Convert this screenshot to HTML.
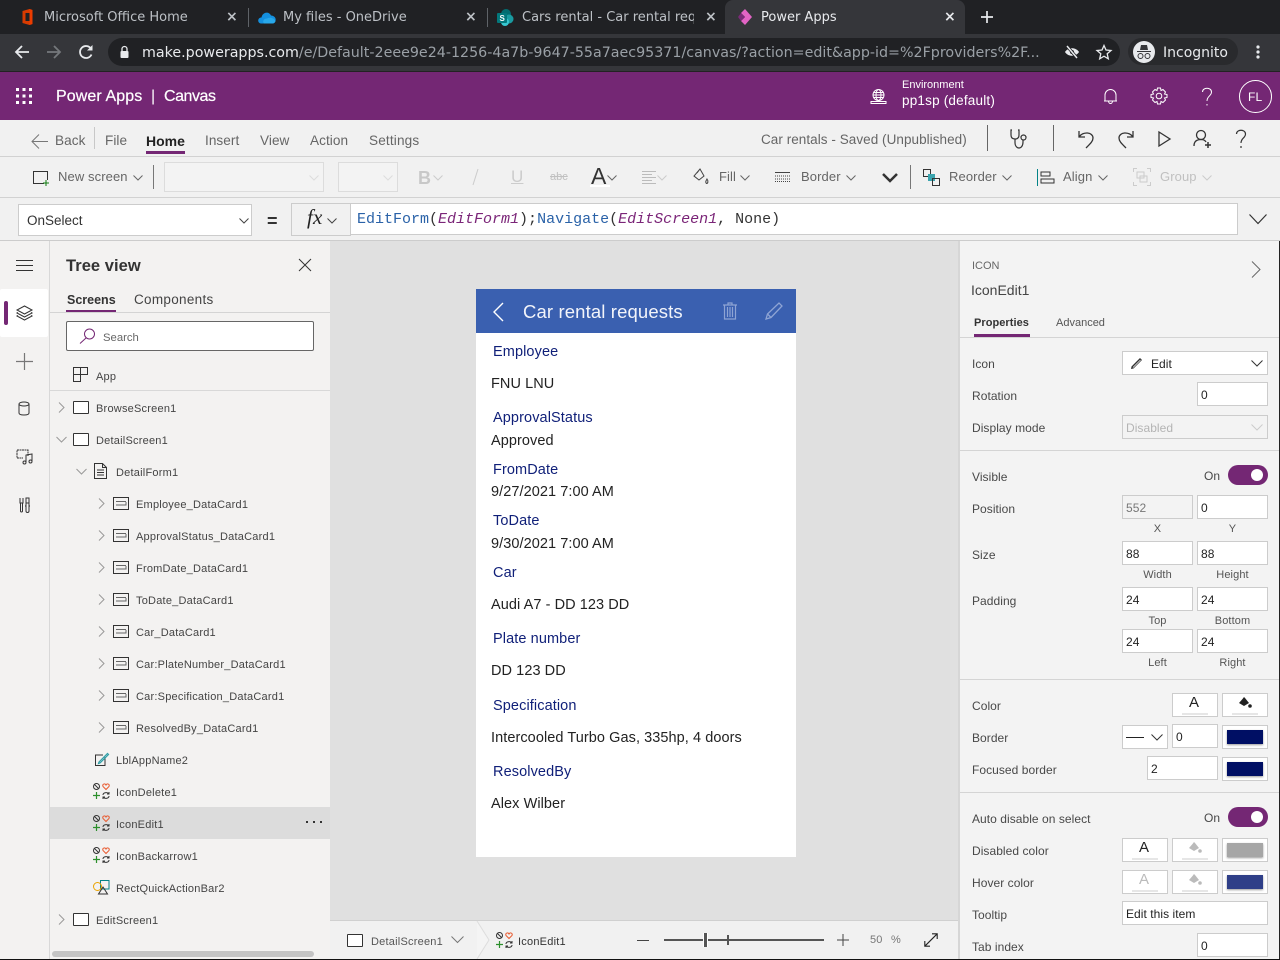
<!DOCTYPE html>
<html><head><meta charset="utf-8"><title>Power Apps</title>
<style>
html,body{margin:0;padding:0;width:1280px;height:960px;overflow:hidden;background:#f3f3f3}
body{position:relative;font-family:"Liberation Sans",sans-serif;font-size:13px;color:#444}
div,span.t,svg.a{position:absolute}
.t{position:absolute;white-space:nowrap;line-height:20px;height:20px;letter-spacing:.15px}
.d{font-family:"DejaVu Sans",sans-serif;letter-spacing:0}
.r{font-size:11px;color:#444;letter-spacing:.22px;margin-top:1px}
.p{font-size:12px;color:#484848;letter-spacing:.05px}
.c{font-size:11px;color:#555;text-align:center;letter-spacing:.1px}
.i{position:absolute;box-sizing:border-box;background:#fff;border:1px solid #ccc;font-size:12px;color:#222;line-height:24px;padding-left:3px;height:24px;letter-spacing:.05px}
.s{position:absolute;box-sizing:border-box;background:#fff;border:1px solid #ccc;height:24px;width:46px}
.s b{position:absolute;left:4px;top:4px;width:36px;height:14px;box-shadow:0 1px 2px #999}
.s u{position:absolute;left:9px;top:19px;width:26px;height:2px;background:#e6e6e6}
.l{font-size:14.5px;color:#0f1f78;letter-spacing:.1px}
.v{font-size:14.5px;color:#222;letter-spacing:.07px}
.m{font-size:13px;color:#666;letter-spacing:.1px}
.o{font-size:13.6px;color:#666;letter-spacing:.05px}
svg{position:absolute;overflow:visible}
.h{position:absolute;background:#d4d4d4;height:2px}
.tg{position:absolute;left:1228px;width:40px;height:20px;border-radius:10px;background:#742774}
.tg i{position:absolute;right:5px;top:4px;width:12px;height:12px;border-radius:6px;background:#fff}
</style></head><body>

<!-- Browser chrome -->
<div style="left:0;top:0;width:1280px;height:34px;background:#202124"></div>
<div style="left:0;top:34px;width:1280px;height:37px;background:#35363a"></div>
<div style="left:0;top:71px;width:1280px;height:1px;background:#222"></div>
<div style="left:725px;top:0;width:240px;height:34px;background:#35363a;border-radius:8px 8px 0 0"></div>
<div style="left:248px;top:8px;width:1px;height:19px;background:#5f6368"></div>
<div style="left:487px;top:8px;width:1px;height:19px;background:#5f6368"></div>

<svg style="left:21px;top:8px" width="13" height="18" viewBox="0 0 12 18"><path d="M1 3 8 1 11 2V16L8 17 1 15Z" fill="#d83b01"/><path d="M4 5H8V13H4Z" fill="#202124"/><path d="M8 1 11 2V16L8 17Z" fill="#eb3c00"/></svg>
<span class="t d" style="left:44px;top:8px;font-size:13px;color:#bdc1c6">Microsoft Office Home</span>
<span class="t d" style="left:226px;top:7px;font-size:14px;color:#bdc1c6;font-weight:bold">×</span>

<svg style="left:258px;top:11px" width="18" height="13" viewBox="0 0 18 13"><path d="M3 12.500C-1 12 -.5 6.500 3.500 6.500 4.500 1 11 0 13 4.500 16 4.500 18.500 7 17.500 10 17 12 15.500 12.500 14 12.500Z" fill="#1490df"/><path d="M6 12.500C4 10 6 7.500 9 7.500 12 6 16 7 17.500 10 17 12 15.500 12.500 14 12.500Z" fill="#28a8ea"/></svg>
<span class="t d" style="left:283px;top:8px;font-size:13px;color:#bdc1c6">My files - OneDrive</span>
<span class="t d" style="left:465px;top:7px;font-size:14px;color:#bdc1c6;font-weight:bold">×</span>

<svg style="left:497px;top:9px" width="17" height="17" viewBox="0 0 17 17"><circle cx="9" cy="5" r="5" fill="#036c70"/><circle cx="12" cy="10" r="4.500" fill="#1a9ba1"/><circle cx="8" cy="13" r="4" fill="#37c6d0"/><rect x="0" y="4" width="10" height="10" rx="1" fill="#03787c"/><text x="2.500" y="12" font-size="8" font-weight="bold" fill="#fff" font-family="Liberation Sans">S</text></svg>
<span class="t d" style="left:522px;top:8px;font-size:13px;color:#bdc1c6;width:172px;overflow:hidden">Cars rental - Car rental requests</span>
<span class="t d" style="left:705px;top:7px;font-size:14px;color:#bdc1c6;font-weight:bold">×</span>

<svg style="left:738px;top:8px" width="15" height="18" viewBox="0 0 15 18"><path d="M7 1 14 9 7 17 3 13 7 9 3 5Z" fill="#e264c4"/><path d="M3 5 7 9 3 13 0 9Z" fill="#7c2a78"/></svg>
<span class="t d" style="left:761px;top:8px;font-size:13px;color:#e8eaed">Power Apps</span>
<span class="t d" style="left:944px;top:7px;font-size:14px;color:#e8eaed;font-weight:bold">×</span>
<svg style="left:980px;top:10px" width="14" height="14"><path d="M7 1V13M1 7H13" stroke="#e8eaed" stroke-width="1.700"/></svg>

<svg style="left:14px;top:44px" width="16" height="16" viewBox="0 0 16 16"><path d="M15 8H2M8 2 2 8 8 14" fill="none" stroke="#e8eaed" stroke-width="1.800"/></svg>
<svg style="left:46px;top:44px" width="16" height="16" viewBox="0 0 16 16"><path d="M1 8H14M8 2 14 8 8 14" fill="none" stroke="#75787c" stroke-width="1.800"/></svg>
<svg style="left:78px;top:44px" width="16" height="16" viewBox="0 0 16 16"><path d="M13.500 10.500A6 6 0 1 1 12 3.500L14 5.500" fill="none" stroke="#e8eaed" stroke-width="1.800"/><path d="M14.500 1V6.500H9Z" fill="#e8eaed"/></svg>
<div style="left:108px;top:38px;width:1012px;height:28px;background:#202124;border-radius:14px"></div>
<svg style="left:119px;top:45px" width="11" height="14" viewBox="0 0 11 14"><path d="M3 6V4A2.500 2.500 0 0 1 8 4V6" fill="none" stroke="#e8eaed" stroke-width="1.300"/><rect x="1.500" y="6" width="8" height="7" rx="1" fill="#e8eaed"/></svg>
<span class="t d" style="left:142px;top:43px;font-size:14.26px;color:#e8eaed;letter-spacing:0">make.powerapps.com<span style="color:#9aa0a6">/e/Default-2eee9e24-1256-4a7b-9647-55a7aec95371/canvas/?action=edit&amp;app-id=%2Fproviders%2F...</span></span>
<svg style="left:1064px;top:44px" width="16" height="16" viewBox="0 0 16 16"><path d="M1 8C4 3 12 3 15 8 12 13 4 13 1 8Z" fill="#e8eaed"/><circle cx="8" cy="8" r="2" fill="#202124"/><path d="M3 2 13 14" stroke="#202124" stroke-width="3"/><path d="M3 2 13 14" stroke="#e8eaed" stroke-width="1.500"/></svg>
<svg style="left:1096px;top:44px" width="16" height="16" viewBox="0 0 16 16"><path d="M8 1.500 10 6 15 6.500 11.200 9.800 12.300 14.800 8 12.200 3.700 14.800 4.800 9.800 1 6.500 6 6Z" fill="none" stroke="#e8eaed" stroke-width="1.300"/></svg>
<div style="left:1128px;top:38px;width:110px;height:27px;background:#292a2d;border-radius:14px"></div>
<svg style="left:1133px;top:41px" width="22" height="22" viewBox="0 0 22 22"><circle cx="11" cy="11" r="11" fill="#e8eaed"/><path d="M4 10H18V11H4ZM7 9 8 4H14L15 9Z" fill="#35363a"/><circle cx="7.500" cy="15" r="2.500" fill="none" stroke="#35363a"/><circle cx="14.500" cy="15" r="2.500" fill="none" stroke="#35363a"/></svg>
<span class="t d" style="left:1163px;top:43px;font-size:14px;color:#e8eaed">Incognito</span>
<svg style="left:1256px;top:45px" width="4" height="14"><circle cx="2" cy="2" r="1.600" fill="#e8eaed"/><circle cx="2" cy="7" r="1.600" fill="#e8eaed"/><circle cx="2" cy="12" r="1.600" fill="#e8eaed"/></svg>

<!-- Purple bar -->
<div style="left:0;top:72px;width:1280px;height:48px;background:#742774"></div>
<svg style="left:16px;top:88px" width="16" height="16" fill="#fff"><rect width="3" height="3"/><rect x="6.500" width="3" height="3"/><rect x="13" width="3" height="3"/><rect y="6.500" width="3" height="3"/><rect x="6.500" y="6.500" width="3" height="3"/><rect x="13" y="6.500" width="3" height="3"/><rect y="13" width="3" height="3"/><rect x="6.500" y="13" width="3" height="3"/><rect x="13" y="13" width="3" height="3"/></svg>
<span class="t" style="left:56px;top:87px;font-size:16px;color:#fff;letter-spacing:.1px;-webkit-text-stroke:.2px #fff">Power Apps</span>
<span class="t" style="left:151px;top:87px;font-size:16px;color:#fff">|</span>
<span class="t" style="left:164px;top:87px;font-size:16px;color:#fff;letter-spacing:-.45px;-webkit-text-stroke:.2px #fff">Canvas</span>
<svg style="left:870px;top:88px" width="17" height="17" viewBox="0 0 17 17" fill="none" stroke="#fff"><circle cx="8.500" cy="7" r="5.500"/><ellipse cx="8.500" cy="7" rx="2.500" ry="5.500"/><path d="M3 7H14M4 4.500H13M4 9.500H13M1 13.500H16V15.500H1Z"/></svg>
<span class="t" style="left:902px;top:75px;font-size:11px;color:#fff;letter-spacing:0">Environment</span>
<span class="t" style="left:902px;top:91px;font-size:13.5px;color:#fff;letter-spacing:.2px">pp1sp (default)</span>
<svg style="left:1103px;top:88px" width="15" height="17" viewBox="0 0 15 17" fill="none" stroke="#fff"><path d="M2 13V7A5.500 5.500 0 0 1 13 7V13ZM1 13H14M5.500 13A2 2.500 0 0 0 9.500 13"/></svg>
<svg style="left:1150px;top:87px" width="18" height="18" viewBox="0 0 18 18" fill="none" stroke="#fff"><circle cx="9" cy="9" r="2.800"/><path d="M7.500 1H10.500L11 3.500 13 2.500 15.500 5 14.500 7 17 7.500V10.500L14.500 11 15.500 13 13 15.500 11 14.500 10.500 17H7.500L7 14.500 5 15.500 2.500 13 3.500 11 1 10.500V7.500L3.500 7 2.500 5 5 2.500 7 3.500Z"/></svg>
<svg style="left:1201px;top:87px" width="12" height="19" viewBox="0 0 12 19" fill="none" stroke="#fff"><path d="M1.500 5C1.500 0 10.500 0 10.500 5 10.500 9 6 9 6 14M6 17V18.500"/></svg>
<div style="left:1239px;top:80px;width:31px;height:31px;border:1px solid #fff;border-radius:50%"></div>
<span class="t" style="left:1248px;top:87px;font-size:12px;color:#fff;letter-spacing:.2px">FL</span>

<!-- Tabs row -->
<div style="left:0;top:120px;width:1280px;height:77px;background:#f1f1f1"></div>
<div class="h" style="left:0;top:156px;width:1280px;height:1px;background:#d2d2d2"></div>
<svg style="left:31px;top:134px" width="17" height="15" viewBox="0 0 17 15"><path d="M17 7.500H1M8 .5 1 7.500 8 14.500" fill="none" stroke="#777" stroke-width="1"/></svg>
<span class="t o" style="left:55px;top:131px">Back</span>
<div style="left:94px;top:127px;width:1px;height:22px;background:#c8c8c8"></div>
<span class="t o" style="left:105px;top:131px">File</span>
<span class="t o" style="left:146px;top:131px;color:#222;font-weight:bold;font-size:14px;letter-spacing:0">Home</span>
<div style="left:146px;top:151px;width:39px;height:3px;background:#742774"></div>
<span class="t o" style="left:205px;top:131px">Insert</span>
<span class="t o" style="left:260px;top:131px">View</span>
<span class="t o" style="left:310px;top:131px">Action</span>
<span class="t o" style="left:369px;top:131px;letter-spacing:.15px">Settings</span>
<span class="t o" style="left:761px;top:130px;font-size:13.5px;letter-spacing:.05px">Car rentals - Saved (Unpublished)</span>
<div style="left:987px;top:125px;width:1px;height:26px;background:#666"></div>
<div style="left:1053px;top:125px;width:1px;height:26px;background:#666"></div>
<svg style="left:1010px;top:128px" width="22" height="22" viewBox="0 0 22 22" fill="none" stroke="#333" stroke-width="1.200"><path d="M2 2H1V7C1 10 3 11 5 11S9 10 9 7V2H8M5 11V15C5 18 7 20 9 20S13 18 13 14V12"/><circle cx="13.500" cy="9.500" r="2.500"/></svg>
<svg style="left:1077px;top:129px" width="18" height="20" viewBox="0 0 18 20" fill="none" stroke="#333" stroke-width="1.300"><path d="M2 2V8H8M2 8C6 2 16 3 16 9 16 12 14 14 9 19"/></svg>
<svg style="left:1117px;top:129px" width="18" height="20" viewBox="0 0 18 20" fill="none" stroke="#333" stroke-width="1.300"><path d="M16 2V8H10M16 8C12 2 2 3 2 9 2 12 4 14 9 19"/></svg>
<svg style="left:1158px;top:131px" width="13" height="16" viewBox="0 0 13 16" fill="none" stroke="#333" stroke-width="1.300"><path d="M1 1 12 8 1 15Z"/></svg>
<svg style="left:1193px;top:129px" width="20" height="20" viewBox="0 0 20 20" fill="none" stroke="#333" stroke-width="1.300"><circle cx="8" cy="6" r="4.500"/><path d="M1 17C1 12 4 10.500 8 10.500 10 10.500 12 11 13 13"/><path d="M15 13V19M12 16H18" stroke-width="1.500"/></svg>
<svg style="left:1235px;top:129px" width="12" height="20" viewBox="0 0 12 20" fill="none" stroke="#333" stroke-width="1.200"><path d="M1.500 5C1.500 0 10.500 0 10.500 5 10.500 9 6 9 6 14M6 17V19"/></svg>

<!-- Ribbon -->
<div class="h" style="left:0;top:197px;width:1280px;height:1px;background:#d2d2d2"></div>
<svg style="left:32px;top:170px" width="17" height="16" viewBox="0 0 17 16" fill="none"><path d="M12 13.500H1.500V1.500H15.500V10" stroke="#333"/><path d="M14 10V16M11 13H17" stroke="#107c10"/></svg>
<span class="t m" style="left:58px;top:167px">New screen</span>
<svg style="left:133px;top:175px" width="10" height="6"><path d="M.5 .5 5 5 9.500 .5" fill="none" stroke="#666"/></svg>
<div style="left:153px;top:165px;width:1px;height:24px;background:#777"></div>
<div style="left:164px;top:162px;width:160px;height:30px;box-sizing:border-box;background:#f3f3f3;border:1px solid #dcdcdc"></div>
<svg style="left:309px;top:175px" width="10" height="6"><path d="M.5 .5 5 5 9.500 .5" fill="none" stroke="#ddd"/></svg>
<div style="left:338px;top:162px;width:60px;height:30px;box-sizing:border-box;background:#f3f3f3;border:1px solid #dcdcdc"></div>
<svg style="left:383px;top:175px" width="10" height="6"><path d="M.5 .5 5 5 9.500 .5" fill="none" stroke="#ddd"/></svg>
<span class="t" style="left:418px;top:168px;font-size:18px;font-weight:bold;color:#c8c8c8">B</span>
<svg style="left:433px;top:175px" width="10" height="6"><path d="M.5 .5 5 5 9.500 .5" fill="none" stroke="#ccc"/></svg>
<svg style="left:472px;top:169px" width="8" height="17"><path d="M6 0 1 16" stroke="#ccc" stroke-width="1"/></svg>
<span class="t" style="left:511px;top:167px;font-size:17px;color:#ccc;font-weight:200;text-decoration:underline">U</span>
<span class="t" style="left:550px;top:167px;font-size:11px;color:#c0c0c0;letter-spacing:0;text-decoration:line-through">abc</span>
<span class="t" style="left:591px;top:166px;font-size:23px;color:#333">A</span>
<div style="left:590px;top:185px;width:20px;height:2px;background:#fff"></div>
<svg style="left:607px;top:175px" width="10" height="6"><path d="M.5 .5 5 5 9.500 .5" fill="none" stroke="#666"/></svg>
<svg style="left:642px;top:170px" width="14" height="14" stroke="#bbb"><path d="M0 1.500H14M0 4.500H10M0 7.500H14M0 10.500H10M0 13.500H14"/></svg>
<svg style="left:657px;top:175px" width="10" height="6"><path d="M.5 .5 5 5 9.500 .5" fill="none" stroke="#ccc"/></svg>
<svg style="left:693px;top:168px" width="17" height="17" viewBox="0 0 17 17" fill="none" stroke="#444"><path d="M7 1 11 8 6 12 1 8ZM7 1 4 5"/><path d="M14 11C13 13 12 14 13.500 15.500 15 15.500 15.500 13 14 11Z"/></svg>
<span class="t m" style="left:719px;top:167px">Fill</span>
<svg style="left:740px;top:175px" width="10" height="6"><path d="M.5 .5 5 5 9.500 .5" fill="none" stroke="#666"/></svg>
<svg style="left:775px;top:172px" width="15" height="10" stroke="#444"><path d="M0 .5H15" /><path d="M0 4H15M0 7H15M0 9.500H15" stroke-dasharray="1 1"/></svg>
<span class="t m" style="left:801px;top:167px">Border</span>
<svg style="left:846px;top:175px" width="10" height="6"><path d="M.5 .5 5 5 9.500 .5" fill="none" stroke="#666"/></svg>
<svg style="left:882px;top:173px" width="16" height="10"><path d="M1 1 8 8 15 1" fill="none" stroke="#333" stroke-width="2.500"/></svg>
<div style="left:910px;top:165px;width:1px;height:24px;background:#777"></div>
<svg style="left:923px;top:169px" width="17" height="17" fill="none" stroke="#333"><rect x=".5" y=".5" width="7" height="7"/><rect x="5" y="5" width="7" height="7" fill="#3aa4ae" stroke="none"/><rect x="9.500" y="9.500" width="7" height="7"/></svg>
<span class="t m" style="left:949px;top:167px">Reorder</span>
<svg style="left:1002px;top:175px" width="10" height="6"><path d="M.5 .5 5 5 9.500 .5" fill="none" stroke="#666"/></svg>
<svg style="left:1037px;top:169px" width="17" height="17" fill="none" stroke="#333"><path d="M.5 0V17" stroke="#038387"/><rect x="4" y="3" width="9" height="4"/><rect x="4" y="10" width="13" height="4"/></svg>
<span class="t m" style="left:1063px;top:167px">Align</span>
<svg style="left:1098px;top:175px" width="10" height="6"><path d="M.5 .5 5 5 9.500 .5" fill="none" stroke="#666"/></svg>
<svg style="left:1133px;top:168px" width="18" height="18" fill="none" stroke="#ccc"><path d="M.5 4V.5H4M14 .5H17.500V4M.5 14V17.500H4M14 17.500H17.500V14" /><rect x="4" y="4" width="7" height="6"/><rect x="7" y="8" width="7" height="6"/></svg>
<span class="t m" style="left:1160px;top:167px;color:#c0c0c0">Group</span>
<svg style="left:1202px;top:175px" width="10" height="6"><path d="M.5 .5 5 5 9.500 .5" fill="none" stroke="#ccc"/></svg>

<!-- Formula bar -->
<div style="left:0;top:198px;width:1280px;height:42px;background:#f1f1f1"></div>
<div style="left:0;top:240px;width:1280px;height:1px;background:#ccc"></div>
<div style="left:18px;top:204px;width:234px;height:32px;box-sizing:border-box;background:#fff;border:1px solid #ccc"></div>
<span class="t" style="left:27px;top:211px;font-size:13.5px;color:#333;letter-spacing:0">OnSelect</span>
<svg style="left:239px;top:218px" width="10" height="6"><path d="M.5 .5 5 5 9.500 .5" fill="none" stroke="#444"/></svg>
<span class="t" style="left:267px;top:211px;font-size:18px;color:#333;font-weight:bold">=</span>
<div style="left:291px;top:203px;width:60px;height:33px;box-sizing:border-box;background:#f1f1f1;border:1px solid #ccc"></div>
<span class="t" style="left:307px;top:207px;font-family:'Liberation Serif',serif;font-style:italic;font-size:21px;color:#222">fx</span>
<svg style="left:327px;top:218px" width="10" height="6"><path d="M.5 .5 5 5 9.500 .5" fill="none" stroke="#444"/></svg>
<div style="left:350px;top:203px;width:888px;height:32px;box-sizing:border-box;background:#fff;border:1px solid #ccc"></div>
<span class="t" style="left:357px;top:210px;font-family:'Liberation Mono',monospace;font-size:15px;letter-spacing:0;color:#333"><span style="color:#2a62a8">EditForm</span>(<i style="color:#7b2578">EditForm1</i>);<span style="color:#2a62a8">Navigate</span>(<i style="color:#7b2578">EditScreen1</i>, None)</span>
<svg style="left:1249px;top:214px" width="18" height="11"><path d="M.5 .5 9 9.500 17.500 .5" fill="none" stroke="#333" stroke-width="1.200"/></svg>

<!-- Left rail -->
<div style="left:0;top:241px;width:50px;height:719px;background:#f3f2f1;border-right:1px solid #d8d8d8;box-sizing:border-box"></div>
<svg style="left:16px;top:260px" width="17" height="11" stroke="#333"><path d="M0 .5H17M0 5.500H17M0 10.500H17"/></svg>
<div style="left:0;top:289px;width:48px;height:48px;background:#fff;border-radius:2px"></div>
<div style="left:4px;top:301px;width:4px;height:24px;background:#742774;border-radius:2px"></div>
<svg style="left:16px;top:305px" width="17" height="16" viewBox="0 0 17 16" fill="none" stroke="#333"><path d="M8.500 1 16 5 8.500 9 1 5Z"/><path d="M2 7.500 1 8 8.500 12 16 8 15 7.500M2 10.500 1 11 8.500 15 16 11 15 10.500"/></svg>
<svg style="left:16px;top:353px" width="17" height="17" stroke="#777" stroke-width="1.200"><path d="M8.500 0V17M0 8.500H17"/></svg>
<svg style="left:18px;top:401px" width="12" height="15" viewBox="0 0 12 15" fill="none" stroke="#333"><ellipse cx="6" cy="3" rx="5" ry="2"/><path d="M1 3V12C1 13.200 3 14 6 14S11 13.200 11 12V3"/></svg>
<svg style="left:16px;top:449px" width="17" height="16" viewBox="0 0 17 16" fill="none" stroke="#333"><path d="M12 7V1H1V9H7" stroke-dasharray="2 .5"/><path d="M10 13V6L16 5V12"/><circle cx="8.500" cy="13.500" r="1.500"/><circle cx="14.500" cy="12.500" r="1.500"/></svg>
<svg style="left:19px;top:497px" width="11" height="16" viewBox="0 0 11 16" fill="none" stroke="#333"><path d="M1 1V6H4V1M1.500 6V14A1 1 0 0 0 3.500 14V6"/><path d="M7 1H10V6H7ZM7 6V14A1.500 1.500 0 0 0 10 14V6M6 9H7M10 9H11"/></svg>

<!-- Tree -->
<div style="left:50px;top:241px;width:280px;height:719px;background:#f3f2f1"></div>
<span class="t" style="left:66px;top:256px;font-size:16.5px;font-weight:bold;color:#333;letter-spacing:.05px">Tree view</span>
<svg style="left:299px;top:259px" width="12" height="12" stroke="#333"><path d="M0 0 12 12M12 0 0 12"/></svg>
<span class="t" style="left:67px;top:290px;font-size:12.5px;color:#333;font-weight:bold;letter-spacing:0">Screens</span>
<span class="t" style="left:134px;top:290px;font-size:13.5px;color:#444;letter-spacing:.3px">Components</span>
<div style="left:66px;top:310px;width:50px;height:2px;background:#742774"></div>
<div style="left:50px;top:312px;width:280px;height:1px;background:#d4d4d4"></div>
<div style="left:66px;top:321px;width:248px;height:30px;box-sizing:border-box;background:#fff;border:1px solid #666;border-radius:2px"></div>
<svg style="left:79px;top:328px" width="17" height="16" viewBox="0 0 17 16" fill="none" stroke="#742774"><circle cx="10.500" cy="6" r="5"/><path d="M7 10 1 15.500"/></svg>
<span class="t" style="left:103px;top:328px;font-size:11.3px;color:#666;letter-spacing:0">Search</span>
<svg style="left:73px;top:367px" width="15" height="15" fill="none" stroke="#333"><path d="M.5 .5H14.500V7.500H7.500V14.500H.5ZM.5 7.500H7.500V.5"/></svg>
<span class="t r" style="left:96px;top:366px">App</span>
<div style="left:50px;top:390px;width:280px;height:1px;background:#d8d8d8"></div>

<div style="left:50px;top:807px;width:280px;height:32px;background:#dcdcdc"></div>
<svg style="left:306px;top:821px" width="16" height="3" fill="#333"><rect width="2" height="2"/><rect x="7" width="2" height="2"/><rect x="14" width="2" height="2"/></svg>

<!-- chevrons -->
<svg style="left:58px;top:402px" width="7" height="11"><path d="M1 .5 6 5.500 1 10.500" fill="none" stroke="#999"/></svg>
<svg style="left:56px;top:436px" width="11" height="7"><path d="M.5 1 5.500 6 10.500 1" fill="none" stroke="#999"/></svg>
<svg style="left:76px;top:468px" width="11" height="7"><path d="M.5 1 5.500 6 10.500 1" fill="none" stroke="#999"/></svg>
<svg style="left:98px;top:498px" width="7" height="11"><path d="M1 .5 6 5.500 1 10.500" fill="none" stroke="#999"/></svg>
<svg style="left:98px;top:530px" width="7" height="11"><path d="M1 .5 6 5.500 1 10.500" fill="none" stroke="#999"/></svg>
<svg style="left:98px;top:562px" width="7" height="11"><path d="M1 .5 6 5.500 1 10.500" fill="none" stroke="#999"/></svg>
<svg style="left:98px;top:594px" width="7" height="11"><path d="M1 .5 6 5.500 1 10.500" fill="none" stroke="#999"/></svg>
<svg style="left:98px;top:626px" width="7" height="11"><path d="M1 .5 6 5.500 1 10.500" fill="none" stroke="#999"/></svg>
<svg style="left:98px;top:658px" width="7" height="11"><path d="M1 .5 6 5.500 1 10.500" fill="none" stroke="#999"/></svg>
<svg style="left:98px;top:690px" width="7" height="11"><path d="M1 .5 6 5.500 1 10.500" fill="none" stroke="#999"/></svg>
<svg style="left:98px;top:722px" width="7" height="11"><path d="M1 .5 6 5.500 1 10.500" fill="none" stroke="#999"/></svg>
<svg style="left:58px;top:914px" width="7" height="11"><path d="M1 .5 6 5.500 1 10.500" fill="none" stroke="#999"/></svg>

<!-- screen icons -->
<div style="left:73px;top:401px;width:14px;height:11px;border:1px solid #333;border-radius:1px;background:#fff"></div>
<div style="left:73px;top:433px;width:14px;height:11px;border:1px solid #333;border-radius:1px;background:#fff"></div>
<div style="left:73px;top:913px;width:14px;height:11px;border:1px solid #333;border-radius:1px;background:#fff"></div>
<svg style="left:94px;top:463px" width="13" height="16" viewBox="0 0 13 16" fill="none" stroke="#333"><path d="M.5 .5H8.500L12.500 4.500V15.500H.5ZM8.500 .5V4.500H12.500M3 7H10M3 9.500H10M3 12H10"/></svg>

<span class="t r" style="left:96px;top:398px">BrowseScreen1</span>
<span class="t r" style="left:96px;top:430px">DetailScreen1</span>
<span class="t r" style="left:116px;top:462px">DetailForm1</span>

<svg style="left:113px;top:497px" width="16" height="13" fill="none" stroke="#333"><rect x=".5" y=".5" width="15" height="12"/><path d="M3 4.500H13M3 8H13V5" stroke="#666"/></svg>
<span class="t r" style="left:136px;top:494px">Employee_DataCard1</span>
<svg style="left:113px;top:529px" width="16" height="13" fill="none" stroke="#333"><rect x=".5" y=".5" width="15" height="12"/><path d="M3 4.500H13M3 8H13V5" stroke="#666"/></svg>
<span class="t r" style="left:136px;top:526px">ApprovalStatus_DataCard1</span>
<svg style="left:113px;top:561px" width="16" height="13" fill="none" stroke="#333"><rect x=".5" y=".5" width="15" height="12"/><path d="M3 4.500H13M3 8H13V5" stroke="#666"/></svg>
<span class="t r" style="left:136px;top:558px">FromDate_DataCard1</span>
<svg style="left:113px;top:593px" width="16" height="13" fill="none" stroke="#333"><rect x=".5" y=".5" width="15" height="12"/><path d="M3 4.500H13M3 8H13V5" stroke="#666"/></svg>
<span class="t r" style="left:136px;top:590px">ToDate_DataCard1</span>
<svg style="left:113px;top:625px" width="16" height="13" fill="none" stroke="#333"><rect x=".5" y=".5" width="15" height="12"/><path d="M3 4.500H13M3 8H13V5" stroke="#666"/></svg>
<span class="t r" style="left:136px;top:622px">Car_DataCard1</span>
<svg style="left:113px;top:657px" width="16" height="13" fill="none" stroke="#333"><rect x=".5" y=".5" width="15" height="12"/><path d="M3 4.500H13M3 8H13V5" stroke="#666"/></svg>
<span class="t r" style="left:136px;top:654px">Car:PlateNumber_DataCard1</span>
<svg style="left:113px;top:689px" width="16" height="13" fill="none" stroke="#333"><rect x=".5" y=".5" width="15" height="12"/><path d="M3 4.500H13M3 8H13V5" stroke="#666"/></svg>
<span class="t r" style="left:136px;top:686px">Car:Specification_DataCard1</span>
<svg style="left:113px;top:721px" width="16" height="13" fill="none" stroke="#333"><rect x=".5" y=".5" width="15" height="12"/><path d="M3 4.500H13M3 8H13V5" stroke="#666"/></svg>
<span class="t r" style="left:136px;top:718px">ResolvedBy_DataCard1</span>

<svg style="left:95px;top:752px" width="14" height="15" viewBox="0 0 14 15" fill="none"><path d="M10 5V13.500H.5V3H8" stroke="#333"/><path d="M4 10 12.500 1.500 13.500 2.500 5 11 3.500 11.500Z" stroke="#2f9ea6" stroke-width="1.200"/></svg>
<span class="t r" style="left:116px;top:750px">LblAppName2</span>

<svg style="left:93px;top:783px" width="17" height="17" viewBox="0 0 17 17" fill="none"><circle cx="3.500" cy="3.500" r="3" stroke="#333"/><path d="M1.500 1.500 5.500 5.500" stroke="#333"/><path d="M13 6.500 10 3.500C9 1 12 0 13 2 14 0 17 1 16 3.500Z" stroke="#e8592e"/><path d="M3.500 9V16M0 12.500H7" stroke="#2c8f2c" stroke-width="1.200"/><path d="M10 12C10 9.500 14 9 15.500 10.500M16 13C16 15.500 12 16 10.500 14.500M14 11H16V9M12 14H10V16" stroke="#333"/></svg>
<span class="t r" style="left:116px;top:782px">IconDelete1</span>
<svg style="left:93px;top:815px" width="17" height="17" viewBox="0 0 17 17" fill="none"><circle cx="3.500" cy="3.500" r="3" stroke="#333"/><path d="M1.500 1.500 5.500 5.500" stroke="#333"/><path d="M13 6.500 10 3.500C9 1 12 0 13 2 14 0 17 1 16 3.500Z" stroke="#e8592e"/><path d="M3.500 9V16M0 12.500H7" stroke="#2c8f2c" stroke-width="1.200"/><path d="M10 12C10 9.500 14 9 15.500 10.500M16 13C16 15.500 12 16 10.500 14.500M14 11H16V9M12 14H10V16" stroke="#333"/></svg>
<span class="t r" style="left:116px;top:814px">IconEdit1</span>
<svg style="left:93px;top:847px" width="17" height="17" viewBox="0 0 17 17" fill="none"><circle cx="3.500" cy="3.500" r="3" stroke="#333"/><path d="M1.500 1.500 5.500 5.500" stroke="#333"/><path d="M13 6.500 10 3.500C9 1 12 0 13 2 14 0 17 1 16 3.500Z" stroke="#e8592e"/><path d="M3.500 9V16M0 12.500H7" stroke="#2c8f2c" stroke-width="1.200"/><path d="M10 12C10 9.500 14 9 15.500 10.500M16 13C16 15.500 12 16 10.500 14.500M14 11H16V9M12 14H10V16" stroke="#333"/></svg>
<span class="t r" style="left:116px;top:846px">IconBackarrow1</span>
<svg style="left:93px;top:880px" width="17" height="15" viewBox="0 0 17 15" fill="none"><rect x="7.500" y=".5" width="8.500" height="8.500" stroke="#038387"/><circle cx="4.500" cy="6.500" r="4" stroke="#eaa300"/><path d="M10 7 14.500 14H5.500Z" stroke="#333"/></svg>
<span class="t r" style="left:116px;top:878px">RectQuickActionBar2</span>
<span class="t r" style="left:96px;top:910px">EditScreen1</span>
<div style="left:52px;top:951px;width:262px;height:6px;background:#c4c4c4;border-radius:3px"></div>

<!-- Canvas -->
<div style="left:330px;top:241px;width:630px;height:680px;background:#e0e0e0"></div>
<div style="left:476px;top:289px;width:320px;height:568px;background:#fff"></div>
<div style="left:476px;top:289px;width:320px;height:44px;background:#3a60b0"></div>
<svg style="left:492px;top:302px" width="12" height="20"><path d="M11 1 2 10 11 19" fill="none" stroke="#fff" stroke-width="1.400"/></svg>
<span class="t" style="left:523px;top:302px;font-size:18.5px;color:#f2f4fa;letter-spacing:.13px">Car rental requests</span>
<svg style="left:723px;top:302px" width="14" height="18" viewBox="0 0 14 18" fill="none" stroke="#8ea4d4" stroke-width="1.200"><path d="M0 3H14M5 3V1H9V3M1.500 3V17H12.500V3M4.500 5V15M7 5V15M9.500 5V15"/></svg>
<svg style="left:765px;top:302px" width="18" height="18" viewBox="0 0 18 18" fill="none" stroke="#8ea4d4" stroke-width="1.300"><path d="M1 17 2.500 12 14 1 17 4 6 15.500ZM2.500 12 6 15.500"/></svg>

<span class="t l" style="left:493px;top:342px">Employee</span>
<span class="t v" style="left:491px;top:374px">FNU LNU</span>
<span class="t l" style="left:493px;top:408px">ApprovalStatus</span>
<span class="t v" style="left:491px;top:431px">Approved</span>
<span class="t l" style="left:493px;top:460px">FromDate</span>
<span class="t v" style="left:491px;top:482px">9/27/2021 7:00 AM</span>
<span class="t l" style="left:493px;top:511px">ToDate</span>
<span class="t v" style="left:491px;top:534px">9/30/2021 7:00 AM</span>
<span class="t l" style="left:493px;top:563px">Car</span>
<span class="t v" style="left:491px;top:595px">Audi A7 - DD 123 DD</span>
<span class="t l" style="left:493px;top:629px">Plate number</span>
<span class="t v" style="left:491px;top:661px">DD 123 DD</span>
<span class="t l" style="left:493px;top:696px">Specification</span>
<span class="t v" style="left:491px;top:728px">Intercooled Turbo Gas, 335hp, 4 doors</span>
<span class="t l" style="left:493px;top:762px">ResolvedBy</span>
<span class="t v" style="left:491px;top:794px">Alex Wilber</span>

<!-- Status bar -->
<div style="left:330px;top:920px;width:630px;height:1px;background:#d0d0d0"></div>
<div style="left:330px;top:921px;width:630px;height:39px;background:#f1f1f1"></div>
<svg style="left:478px;top:921px" width="12" height="38"><path d="M-1 0 11 19 -1 38" fill="#f4f4f4" stroke="#ddd"/></svg>
<div style="left:347px;top:934px;width:14px;height:11px;border:1px solid #333;border-radius:1px;background:#fff"></div>
<span class="t r" style="left:371px;top:931px;color:#555">DetailScreen1</span>
<svg style="left:451px;top:936px" width="13" height="8"><path d="M.5 .5 6.500 6.500 12.500 .5" fill="none" stroke="#777"/></svg>
<svg style="left:496px;top:932px" width="17" height="17" viewBox="0 0 17 17" fill="none"><circle cx="3.500" cy="3.500" r="3" stroke="#333"/><path d="M1.500 1.500 5.500 5.500" stroke="#333"/><path d="M13 6.500 10 3.500C9 1 12 0 13 2 14 0 17 1 16 3.500Z" stroke="#e8592e"/><path d="M3.500 9V16M0 12.500H7" stroke="#2c8f2c" stroke-width="1.200"/><path d="M10 12C10 9.500 14 9 15.500 10.500M16 13C16 15.500 12 16 10.500 14.500M14 11H16V9M12 14H10V16" stroke="#333"/></svg>
<span class="t r" style="left:518px;top:931px;color:#333">IconEdit1</span>
<div style="left:637px;top:940px;width:12px;height:1px;background:#444"></div>
<div style="left:664px;top:939px;width:160px;height:2px;background:#555"></div>
<div style="left:703px;top:933px;width:3px;height:14px;background:#555;border:1px solid #fff;border-top:0;border-bottom:0"></div>
<div style="left:727px;top:935px;width:2px;height:10px;background:#555"></div>
<svg style="left:837px;top:934px" width="12" height="12" stroke="#444"><path d="M6 0V12M0 6H12"/></svg>
<span class="t" style="left:870px;top:930px;font-size:11px;color:#777;letter-spacing:.1px">50</span>
<span class="t" style="left:891px;top:930px;font-size:11px;color:#777;letter-spacing:0">%</span>
<svg style="left:924px;top:933px" width="14" height="14" fill="none" stroke="#222" stroke-width="1.100"><path d="M.8 13.200 13.200 .8M8 .8H13.200V6M.8 8V13.200H6"/></svg>

<!-- Right panel -->
<div style="left:958px;top:241px;width:322px;height:719px;background:#f3f3f3;border-left:2px solid #d6d6d6;box-sizing:border-box"></div>
<span class="t" style="left:972px;top:256px;font-size:11px;color:#666;letter-spacing:0">ICON</span>
<svg style="left:1251px;top:261px" width="10" height="17"><path d="M1 .5 9 8.500 1 16.500" fill="none" stroke="#666"/></svg>
<span class="t" style="left:971px;top:280px;font-size:14px;color:#444;letter-spacing:0">IconEdit1</span>
<span class="t" style="left:974px;top:313px;font-size:11px;color:#333;font-weight:bold;letter-spacing:.05px">Properties</span>
<div style="left:974px;top:334px;width:56px;height:3px;background:#742774"></div>
<span class="t" style="left:1056px;top:313px;font-size:11px;color:#555;letter-spacing:0">Advanced</span>
<div class="h" style="left:960px;top:337px;width:320px;height:1px"></div>

<span class="t p" style="left:972px;top:354px">Icon</span>
<div class="i" style="left:1122px;top:351px;width:146px;padding-left:28px">Edit</div>
<svg style="left:1130px;top:357px" width="13" height="13"><path d="M1 12 1.500 9.500 10 1 12 3 3.500 11.500Z" fill="#333"/><path d="M3 10.500 10.500 3" stroke="#fff" stroke-width=".7"/></svg>
<svg style="left:1251px;top:360px" width="12" height="7"><path d="M.5 .5 6 6 11.500 .5" fill="none" stroke="#333"/></svg>
<span class="t p" style="left:972px;top:386px">Rotation</span>
<div class="i" style="left:1197px;top:382px;width:71px">0</div>
<span class="t p" style="left:972px;top:418px">Display mode</span>
<div class="i" style="left:1122px;top:415px;width:146px;background:#f3f3f3;color:#b4b4b4">Disabled</div>
<svg style="left:1251px;top:424px" width="12" height="7"><path d="M.5 .5 6 6 11.500 .5" fill="none" stroke="#ccc"/></svg>
<div class="h" style="left:960px;top:450px;width:320px;height:1px"></div>

<span class="t p" style="left:972px;top:467px">Visible</span>
<span class="t p" style="left:1204px;top:466px">On</span>
<div class="tg" style="top:465px"><i></i></div>
<span class="t p" style="left:972px;top:499px">Position</span>
<div class="i" style="left:1122px;top:495px;width:71px;background:#f3f3f3;color:#777">552</div>
<div class="i" style="left:1197px;top:495px;width:71px">0</div>
<span class="t c" style="left:1122px;top:519px;width:71px">X</span>
<span class="t c" style="left:1197px;top:519px;width:71px">Y</span>
<span class="t p" style="left:972px;top:545px">Size</span>
<div class="i" style="left:1122px;top:541px;width:71px">88</div>
<div class="i" style="left:1197px;top:541px;width:71px">88</div>
<span class="t c" style="left:1122px;top:565px;width:71px">Width</span>
<span class="t c" style="left:1197px;top:565px;width:71px">Height</span>
<span class="t p" style="left:972px;top:591px">Padding</span>
<div class="i" style="left:1122px;top:587px;width:71px">24</div>
<div class="i" style="left:1197px;top:587px;width:71px">24</div>
<span class="t c" style="left:1122px;top:611px;width:71px">Top</span>
<span class="t c" style="left:1197px;top:611px;width:71px">Bottom</span>
<div class="i" style="left:1122px;top:629px;width:71px">24</div>
<div class="i" style="left:1197px;top:629px;width:71px">24</div>
<span class="t c" style="left:1122px;top:653px;width:71px">Left</span>
<span class="t c" style="left:1197px;top:653px;width:71px">Right</span>
<div class="h" style="left:960px;top:679px;width:320px;height:1px"></div>

<span class="t p" style="left:972px;top:696px">Color</span>
<div class="s" style="left:1172px;top:693px"><u></u></div>
<span class="t" style="left:1189px;top:693px;font-size:15px;color:#222">A</span>
<div class="s" style="left:1222px;top:693px"><u></u></div>
<svg style="left:1239px;top:697px" width="13" height="13" viewBox="0 0 13 13" fill="#222"><path d="M5 0 6 1 10 6 5 9 0 6 3.500 2Z"/><circle cx="11" cy="9" r="1.800"/></svg>
<span class="t p" style="left:972px;top:728px">Border</span>
<div class="s" style="left:1122px;top:725px"></div>
<div style="left:1126px;top:737px;width:18px;height:1px;background:#222"></div>
<svg style="left:1151px;top:734px" width="12" height="7"><path d="M.5 .5 6 6 11.500 .5" fill="none" stroke="#333"/></svg>
<div class="i" style="left:1172px;top:724px;width:46px">0</div>
<div class="s" style="left:1222px;top:725px"><b style="background:#000f64"></b></div>
<span class="t p" style="left:972px;top:760px">Focused border</span>
<div class="i" style="left:1147px;top:756px;width:71px">2</div>
<div class="s" style="left:1222px;top:757px"><b style="background:#000f64"></b></div>
<div class="h" style="left:960px;top:792px;width:320px;height:1px"></div>

<span class="t p" style="left:972px;top:809px">Auto disable on select</span>
<span class="t p" style="left:1204px;top:808px">On</span>
<div class="tg" style="top:807px"><i></i></div>
<span class="t p" style="left:972px;top:841px">Disabled color</span>
<div class="s" style="left:1122px;top:838px"><u></u></div>
<span class="t" style="left:1139px;top:838px;font-size:15px;color:#222">A</span>
<div class="s" style="left:1172px;top:838px"><u></u></div>
<svg style="left:1189px;top:842px" width="13" height="13" viewBox="0 0 13 13" fill="#bbb"><path d="M5 0 6 1 10 6 5 9 0 6 3.500 2Z"/><circle cx="11" cy="9" r="1.800"/></svg>
<div class="s" style="left:1222px;top:838px"><b style="background:#a6a6a6"></b></div>
<span class="t p" style="left:972px;top:873px">Hover color</span>
<div class="s" style="left:1122px;top:870px"><u></u></div>
<span class="t" style="left:1139px;top:870px;font-size:15px;color:#bbb">A</span>
<div class="s" style="left:1172px;top:870px"><u></u></div>
<svg style="left:1189px;top:874px" width="13" height="13" viewBox="0 0 13 13" fill="#bbb"><path d="M5 0 6 1 10 6 5 9 0 6 3.500 2Z"/><circle cx="11" cy="9" r="1.800"/></svg>
<div class="s" style="left:1222px;top:870px"><b style="background:#2f3f88"></b></div>
<span class="t p" style="left:972px;top:905px">Tooltip</span>
<div class="i" style="left:1122px;top:901px;width:146px">Edit this item</div>
<span class="t p" style="left:972px;top:937px">Tab index</span>
<div class="i" style="left:1197px;top:933px;width:71px">0</div>

<div style="left:1279px;top:241px;width:1px;height:719px;background:#222"></div>
<div style="left:0;top:959px;width:1280px;height:1px;background:#111"></div>
</body></html>
